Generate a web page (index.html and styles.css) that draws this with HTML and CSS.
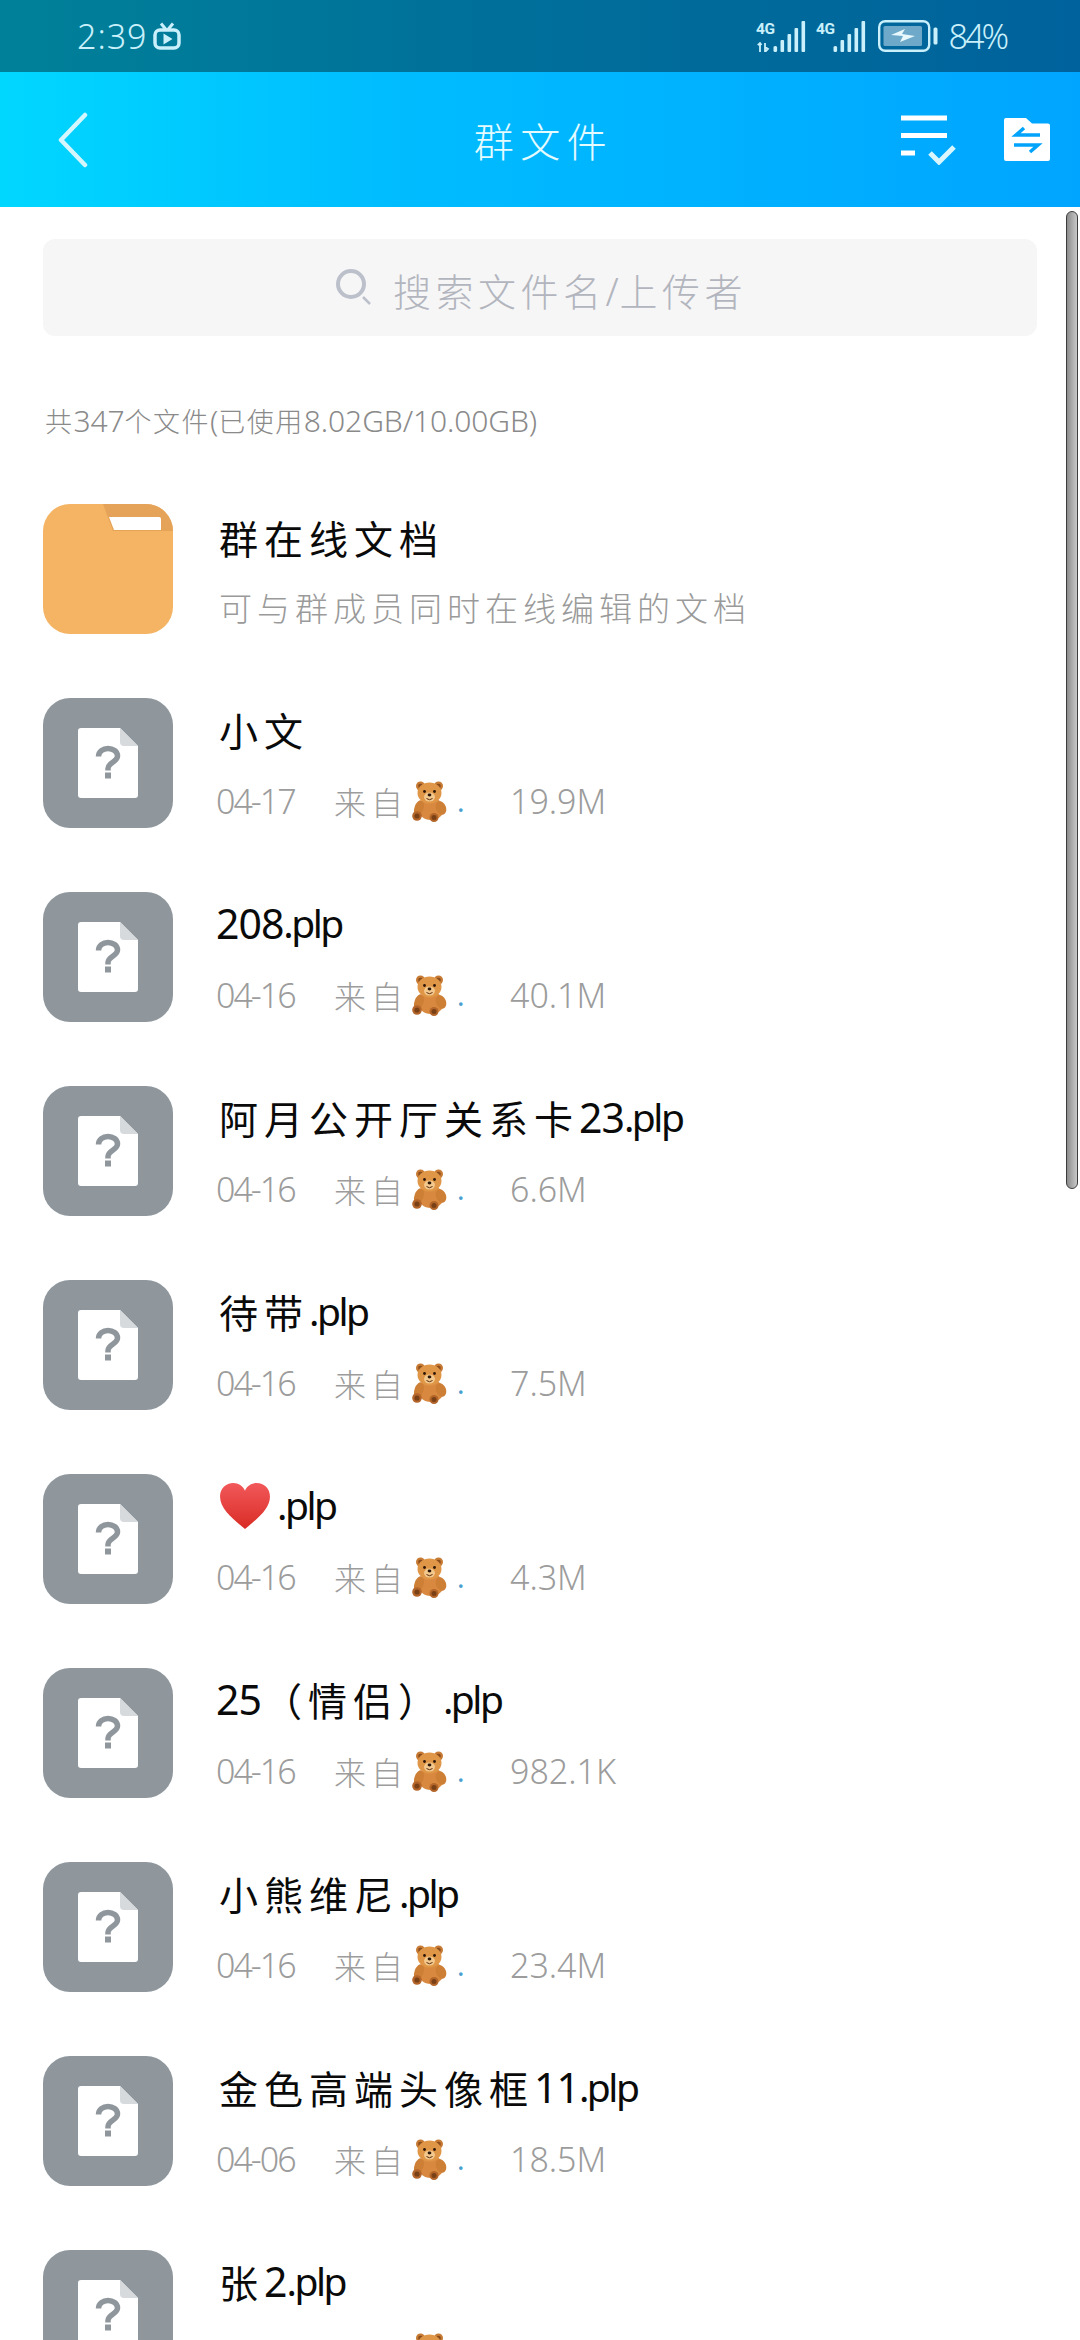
FILE: index.html
```html
<!DOCTYPE html>
<html lang="zh">
<head>
<meta charset="utf-8">
<title>群文件</title>
<link rel="stylesheet" href="styles.css">
</head>
<body>
<svg class="defs" width="0" height="0" aria-hidden="true">
  <symbol id="unknown" viewBox="0 0 130 130">
    <rect width="130" height="130" rx="27" fill="#8f979d"/>
    <path d="M38 30h39l18 18v49a3 3 0 0 1-3 3H38a3 3 0 0 1-3-3V33a3 3 0 0 1 3-3z" fill="#fff"/>
    <path d="M77 30l18 18H81a4 4 0 0 1-4-4z" fill="#d7dadc"/>
    <path d="M55.500 58.500c0-5 4.500-8 9.500-8s9.500 3 9.500 7.500c0 6-9.500 6.500-9.500 12.500v2" fill="none" stroke="#8f979d" stroke-width="5.500"/>
    <rect x="62" y="74.500" width="6" height="6" fill="#8f979d"/>
  </symbol>
  <symbol id="bear" viewBox="0 0 36 42">
    <ellipse cx="19" cy="29" rx="13" ry="11" fill="#d8893f"/>
    <ellipse cx="29" cy="28" rx="5" ry="7" fill="#ce7f36" transform="rotate(-20 29 28)"/>
    <ellipse cx="7" cy="28" rx="4.500" ry="8" fill="#ce7f36" transform="rotate(20 7 28)"/>
    <circle cx="8.500" cy="6" r="4.500" fill="#c67a33"/>
    <circle cx="26.500" cy="6" r="4.500" fill="#c67a33"/>
    <circle cx="8.500" cy="6" r="2.300" fill="#8a4c1c"/>
    <circle cx="26.500" cy="6" r="2.300" fill="#8a4c1c"/>
    <ellipse cx="17.500" cy="13" rx="12" ry="10.500" fill="#df9647"/>
    <ellipse cx="17.500" cy="17" rx="5.500" ry="4.500" fill="#f3c88c"/>
    <circle cx="12.500" cy="11.500" r="1.400" fill="#2d1708"/>
    <circle cx="22.500" cy="11.500" r="1.400" fill="#2d1708"/>
    <ellipse cx="17.500" cy="15" rx="1.900" ry="1.400" fill="#2d1708"/>
    <path d="M14.500 18.500q3 2.500 6 0" fill="none" stroke="#5b2e10" stroke-width="1"/>
    <circle cx="5" cy="36" r="4.800" fill="#b4662a"/>
    <circle cx="5" cy="36" r="2.600" fill="#7a4016"/>
    <circle cx="22" cy="37.500" r="4.500" fill="#b4662a"/>
    <circle cx="22" cy="37.500" r="2.500" fill="#7a4016"/>
  </symbol>
  <linearGradient id="heartfill" x1="0" y1="0" x2="0" y2="1">
    <stop offset="0" stop-color="#f2585a"/>
    <stop offset="1" stop-color="#d92c25"/>
  </linearGradient>
</svg>

<div class="status">
  <div class="status-left">
    <span class="clock">2:39</span>
    <svg class="tv" viewBox="0 0 28 28">
      <path d="M8 1.500l5 6M20 1.500l-5 6" stroke="#c9f0fb" stroke-width="3" fill="none"/>
      <rect x="2" y="8" width="24" height="18" rx="5" fill="none" stroke="#c9f0fb" stroke-width="3.500"/>
      <path d="M10.500 11.500l9 5.500-9 5.500z" fill="#c9f0fb"/>
    </svg>
  </div>
  <div class="status-right">
    <svg class="signal" viewBox="0 0 50 31">
      <text class="sig-label" x="0" y="13">4G</text>
      <path d="M4 31v-9m-2.200 2.200L4 22l1.500 2M9 22v9l3-3-3-2" stroke="#c9f0fb" stroke-width="1.800" fill="none"/>
      <rect x="17.500" y="25" width="3.600" height="6" rx="1.500" fill="#c9f0fb"/>
      <rect x="24.500" y="19" width="3.600" height="12" rx="1" fill="#c9f0fb"/>
      <rect x="31.500" y="13" width="3.600" height="18" rx="1" fill="#c9f0fb"/>
      <rect x="38.500" y="7" width="3.600" height="24" rx="1" fill="#c9f0fb"/>
      <rect x="45.500" y="0" width="3.600" height="31" rx="1" fill="#c9f0fb"/>
    </svg>
    <svg class="signal" viewBox="0 0 50 31">
      <text class="sig-label" x="0" y="13">4G</text>
      <rect x="17.500" y="25" width="3.600" height="6" rx="1.500" fill="#c9f0fb"/>
      <rect x="24.500" y="19" width="3.600" height="12" rx="1" fill="#c9f0fb"/>
      <rect x="31.500" y="13" width="3.600" height="18" rx="1" fill="#c9f0fb"/>
      <rect x="38.500" y="7" width="3.600" height="24" rx="1" fill="#c9f0fb"/>
      <rect x="45.500" y="0" width="3.600" height="31" rx="1" fill="#c9f0fb"/>
    </svg>
    <svg class="battery" viewBox="0 0 60 32">
      <rect x="1.200" y="1.200" width="50" height="29.600" rx="6" fill="none" stroke="#c9f0fb" stroke-width="2.400"/>
      <rect x="5.500" y="6" width="38.500" height="20" rx="1.500" fill="#6ea9c9"/>
      <path d="M13 15l14-6-3 5 13 2-15 6 3-6z" fill="#e8f8fd"/>
      <rect x="55.500" y="7.500" width="4" height="17" rx="1.500" fill="#c9f0fb"/>
    </svg>
    <span class="percent">84%</span>
  </div>
</div>

<header class="bar">
  <svg class="back" viewBox="0 0 32 56">
    <path d="M28 3L4 28l24 25" fill="none" stroke="#d4f7ff" stroke-width="4.500" stroke-linecap="round" stroke-linejoin="round"/>
  </svg>
  <h1 class="bar-title">群文件</h1>
  <div class="bar-actions">
    <svg class="act-list" viewBox="0 0 56 50">
      <path d="M1 3h46M1 20.500h46M1 38h14" stroke="#fff" stroke-width="5" fill="none"/>
      <path d="M30 38l9 9 15-15" stroke="#d9f6ff" stroke-width="5" fill="none"/>
    </svg>
    <svg class="act-folder" viewBox="0 0 46 43">
      <path d="M2 0h20l6 5.500h16a2 2 0 0 1 2 2V41a2 2 0 0 1-2 2H2a2 2 0 0 1-2-2V2a2 2 0 0 1 2-2z" fill="#fff"/>
      <path d="M36 17H12l8-7M10 27h24l-8 7" fill="none" stroke="#02a4fb" stroke-width="3.500"/>
    </svg>
  </div>
</header>

<main class="page">
  <div class="search">
    <svg class="search-icon" viewBox="0 0 40 40">
      <circle cx="17" cy="16" r="13" fill="none" stroke="#bcc0cb" stroke-width="4"/>
      <path d="M29 29l7 7" stroke="#bcc0cb" stroke-width="2.500"/>
    </svg>
    <span class="search-text">搜索文件名<i class="slash">/</i>上传者</span>
  </div>
  <p class="count"><span class="c-cj">共</span>347<span class="c-cj">个文件</span>(<span class="c-cj">已使用</span>8.02GB/10.00GB)</p>

  <ul class="list">
    <li class="row">
      <svg class="thumb" viewBox="0 0 130 130">
        <rect width="130" height="130" rx="27" fill="#f4b463"/>
        <path d="M60 0h43a27 27 0 0 1 27 27H70z" fill="#e5a35a"/>
        <path d="M66 13h50a2 2 0 0 1 2 2v11H71z" fill="#fff"/>
      </svg>
      <div class="info info-doc">
        <div class="name"><span class="cj">群在线文档</span></div>
        <div class="desc">可与群成员同时在线编辑的文档</div>
      </div>
    </li>
    <li class="row">
      <svg class="thumb"><use href="#unknown"/></svg>
      <div class="info">
        <div class="name"><span class="cj">小文</span></div>
        <div class="meta"><span class="date">04-17</span><span class="from"><span class="from-label">来自</span><svg class="bear"><use href="#bear"/></svg><span class="dot">.</span></span><span class="size">19.9M</span></div>
      </div>
    </li>
    <li class="row">
      <svg class="thumb"><use href="#unknown"/></svg>
      <div class="info">
        <div class="name">208<span class="ext">.plp</span></div>
        <div class="meta"><span class="date">04-16</span><span class="from"><span class="from-label">来自</span><svg class="bear"><use href="#bear"/></svg><span class="dot">.</span></span><span class="size">40.1M</span></div>
      </div>
    </li>
    <li class="row">
      <svg class="thumb"><use href="#unknown"/></svg>
      <div class="info">
        <div class="name"><span class="cj">阿月公开厅关系卡</span>23<span class="ext">.plp</span></div>
        <div class="meta"><span class="date">04-16</span><span class="from"><span class="from-label">来自</span><svg class="bear"><use href="#bear"/></svg><span class="dot">.</span></span><span class="size">6.6M</span></div>
      </div>
    </li>
    <li class="row">
      <svg class="thumb"><use href="#unknown"/></svg>
      <div class="info">
        <div class="name"><span class="cj">待带</span><span class="ext">.plp</span></div>
        <div class="meta"><span class="date">04-16</span><span class="from"><span class="from-label">来自</span><svg class="bear"><use href="#bear"/></svg><span class="dot">.</span></span><span class="size">7.5M</span></div>
      </div>
    </li>
    <li class="row">
      <svg class="thumb"><use href="#unknown"/></svg>
      <div class="info">
        <div class="name"><svg class="heart" viewBox="0 0 54 50"><path d="M27 49C14 38 1 28 1 15 1 7 7 1 15 1c5 0 10 3 12 8 2-5 7-8 12-8 8 0 14 6 14 14 0 13-13 23-26 34z" fill="url(#heartfill)"/></svg><span class="ext">.plp</span></div>
        <div class="meta"><span class="date">04-16</span><span class="from"><span class="from-label">来自</span><svg class="bear"><use href="#bear"/></svg><span class="dot">.</span></span><span class="size">4.3M</span></div>
      </div>
    </li>
    <li class="row">
      <svg class="thumb"><use href="#unknown"/></svg>
      <div class="info">
        <div class="name">25<span class="cj cj-paren">（情侣）</span><span class="ext">.plp</span></div>
        <div class="meta"><span class="date">04-16</span><span class="from"><span class="from-label">来自</span><svg class="bear"><use href="#bear"/></svg><span class="dot">.</span></span><span class="size">982.1K</span></div>
      </div>
    </li>
    <li class="row">
      <svg class="thumb"><use href="#unknown"/></svg>
      <div class="info">
        <div class="name"><span class="cj">小熊维尼</span><span class="ext">.plp</span></div>
        <div class="meta"><span class="date">04-16</span><span class="from"><span class="from-label">来自</span><svg class="bear"><use href="#bear"/></svg><span class="dot">.</span></span><span class="size">23.4M</span></div>
      </div>
    </li>
    <li class="row">
      <svg class="thumb"><use href="#unknown"/></svg>
      <div class="info">
        <div class="name"><span class="cj">金色高端头像框</span>11<span class="ext">.plp</span></div>
        <div class="meta"><span class="date">04-06</span><span class="from"><span class="from-label">来自</span><svg class="bear"><use href="#bear"/></svg><span class="dot">.</span></span><span class="size">18.5M</span></div>
      </div>
    </li>
    <li class="row">
      <svg class="thumb"><use href="#unknown"/></svg>
      <div class="info">
        <div class="name"><span class="cj">张</span>2<span class="ext">.plp</span></div>
        <div class="meta"><span class="date">04-06</span><span class="from"><span class="from-label">来自</span><svg class="bear"><use href="#bear"/></svg><span class="dot">.</span></span><span class="size">18.5M</span></div>
      </div>
    </li>
  </ul>
  <div class="scrollbar"></div>
</main>
</body>
</html>
```
FILE: styles.css
```css
* { box-sizing: border-box; }
html, body { margin: 0; padding: 0; }
body {
  width: 1080px;
  height: 2340px;
  overflow: hidden;
  background: #fff;
  font-family: "Noto Sans", "Noto Sans CJK SC", sans-serif;
  font-weight: 300;
  color: #000;
}
.defs { display: block; position: absolute; }

.status {
  height: 72px;
  display: flex;
  justify-content: space-between;
  align-items: center;
  padding: 0 74px 0 77px;
  background: linear-gradient(90deg, #008199 0%, #00709a 45%, #00629c 100%);
  color: #c9f0fb;
}
.status-left, .status-right { display: flex; align-items: center; }
.clock { font-size: 34px; letter-spacing: 1px; width: 76px; line-height: 36px; }
.tv { width: 28px; height: 28px; }
.signal { width: 50px; height: 31px; margin-right: 10px; }
.sig-label { font-family: "Roboto", sans-serif; font-weight: 700; font-size: 15.500px; letter-spacing: -0.500px; fill: #c9f0fb; }
.battery { width: 60px; height: 32px; margin-left: 2px; margin-right: 11px; }
.percent { font-size: 34px; line-height: 36px; letter-spacing: -3px; }

.bar {
  height: 135px;
  display: grid;
  grid-template-columns: 1fr auto 1fr;
  align-items: center;
  padding: 0 30px 0 57px;
  background: linear-gradient(90deg, #00d7ff 0%, #00bdff 35%, #00a5ff 100%);
}
.back { width: 32px; height: 56px; }
.bar-title {
  margin: 0;
  font-size: 40px;
  font-weight: 300;
  letter-spacing: 6.500px;
  color: #e4fbff;
  font-family: "Noto Sans CJK SC", sans-serif;
  line-height: 52px;
  transform: translateX(-10px);
}
.bar-actions { display: flex; justify-content: flex-end; align-items: center; gap: 48px; }
.act-list { width: 56px; height: 50px; }
.act-folder { width: 46px; height: 43px; }

.page { position: relative; padding: 32px 43px 0; height: 2133px; overflow: hidden; }
.search {
  height: 97px;
  background: #f6f6f7;
  border-radius: 12px;
  display: flex;
  align-items: center;
  justify-content: center;
  gap: 18.500px;
  padding: 0 3px 0 4.500px;
}
.search-icon { width: 40px; height: 40px; }
.search-text {
  font-family: "Noto Sans CJK SC", sans-serif;
  font-size: 38px;
  letter-spacing: 4.500px;
  color: #b2b5bd;
  line-height: 50px;
  margin-top: 6px;
}
.slash { font-style: normal; font-family: "Noto Sans", sans-serif; letter-spacing: 1px; }
.count {
  margin: 65px 0 0 2px;
  height: 40px;
  line-height: 40px;
  font-size: 30px;
  color: #8a8a8a;
  letter-spacing: -0.100px;
}
.c-cj { font-family: "Noto Sans CJK SC", sans-serif; font-size: 27px; letter-spacing: 1.500px; }

.list { list-style: none; margin: 63px 0 0; padding: 0; display: flex; flex-direction: column; gap: 64px; }
.row { display: flex; height: 130px; gap: 43px; }
.thumb { width: 130px; height: 130px; flex: none; }
.info { display: flex; flex-direction: column; min-width: 0; }
.info-doc { margin-left: 3px; }
.name {
  flex: none;
  height: 61px;
  display: flex;
  align-items: center;
  font-size: 41px;
  font-weight: 400;
  letter-spacing: -1px;
  color: #0a0a0a;
  white-space: pre;
}
.info-doc .name { height: 65px; margin-left: -3px; }
.cj { font-family: "Noto Sans CJK SC", sans-serif; font-size: 39px; letter-spacing: 6px; margin-left: 3px; }
.cj-paren { letter-spacing: 6px; margin-left: 2px; }
.ext { font-size: 39px; letter-spacing: -2.500px; }
.heart { width: 54px; height: 48px; margin: 3px 5px 0 2px; }
.desc {
  flex: none;
  height: 74px;
  line-height: 77px;
  font-family: "Noto Sans CJK SC", sans-serif;
  font-size: 33px;
  letter-spacing: 5px;
  color: #9a9a9a;
}
.meta {
  flex: none;
  height: 84px;
  display: flex;
  align-items: center;
  font-size: 34px;
  color: #9c9c9c;
}
.date { width: 118px; letter-spacing: -2px; }
.from { width: 176px; display: flex; align-items: center; }
.from-label { font-family: "Noto Sans CJK SC", sans-serif; font-size: 32px; letter-spacing: 5px; width: 78px; }
.bear { width: 36px; height: 42px; }
.dot { color: #4a9fd0; margin-left: 9px; font-weight: 400; font-size: 28px; }
.size { white-space: nowrap; }

.scrollbar {
  position: absolute;
  top: 4px;
  right: 2px;
  width: 12px;
  height: 978px;
  border-radius: 6px;
  border: 1px solid #3c3c3c;
  background: linear-gradient(90deg, #8c8c8c, #c8c8c8);
}
```
